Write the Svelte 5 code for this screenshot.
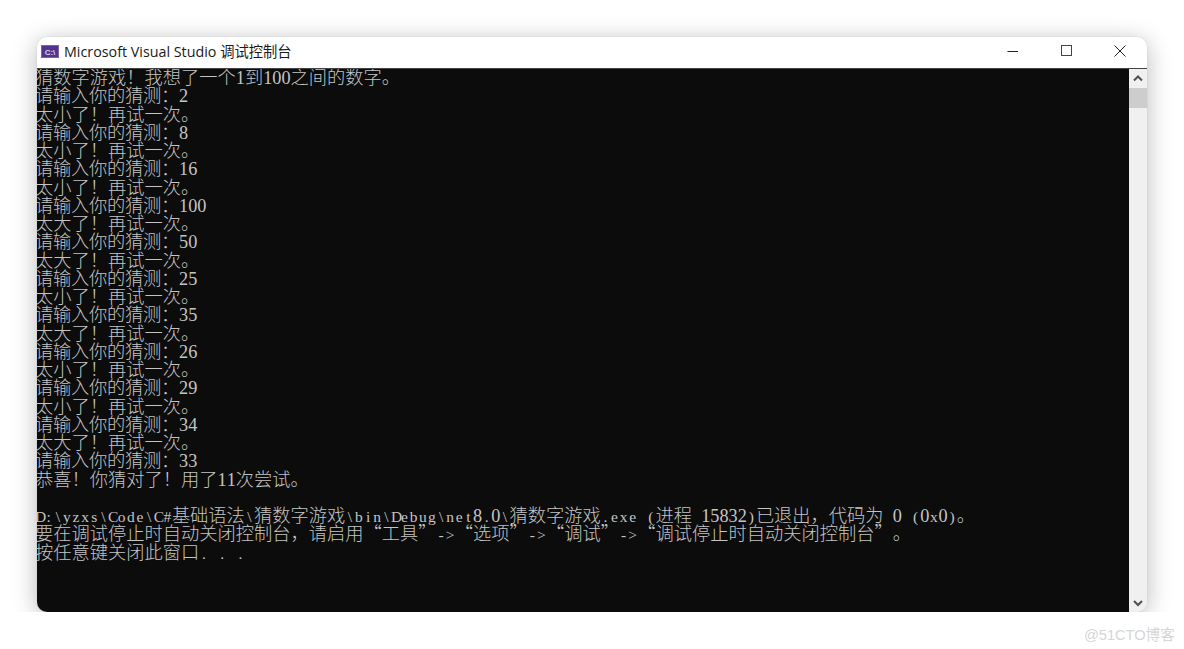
<script lang="ts">
	const lines = [
		'猜数字游戏！我想了一个1到100之间的数字。',
		'请输入你的猜测：2',
		'太小了！再试一次。',
		'请输入你的猜测：8',
		'太小了！再试一次。',
		'请输入你的猜测：16',
		'太小了！再试一次。',
		'请输入你的猜测：100',
		'太大了！再试一次。',
		'请输入你的猜测：50',
		'太大了！再试一次。',
		'请输入你的猜测：25',
		'太小了！再试一次。',
		'请输入你的猜测：35',
		'太大了！再试一次。',
		'请输入你的猜测：26',
		'太小了！再试一次。',
		'请输入你的猜测：29',
		'太小了！再试一次。',
		'请输入你的猜测：34',
		'太大了！再试一次。',
		'请输入你的猜测：33',
		'恭喜！你猜对了！用了11次尝试。',
		'',
		'D:\\yzxs\\Code\\C#基础语法\\猜数字游戏\\bin\\Debug\\net8.0\\猜数字游戏.exe (进程 15832)已退出，代码为 0 (0x0)。',
		'要在调试停止时自动关闭控制台，请启用“工具”->“选项”->“调试”->“调试停止时自动关闭控制台”。',
		'按任意键关闭此窗口. . .'
	];

	// latin and cjk need different sizes to keep the 1:2 console cell ratio
	function runs(line: string) {
		return line.match(/[\x20-\x7e]+|[^\x20-\x7e]+/g) ?? [];
	}

	const isLatin = (run: string) => run.charCodeAt(0) < 0x7f;
	const isDigit = (ch: string) => ch >= '0' && ch <= '9';
</script>

<div class="window">
	<div class="titlebar">
		<svg class="app-icon" width="18" height="13" viewBox="0 0 18 13">
			<rect x="0" y="0" width="18" height="13" fill="#7a63a8" />
			<rect x="1" y="1" width="16" height="11" fill="#53348c" />
			<text x="9" y="9.5" text-anchor="middle" class="icon-text">C:\</text>
		</svg>
		<span class="title">Microsoft Visual Studio 调试控制台</span>
		<div class="controls">
			<button type="button" aria-label="最小化">
				<svg width="12" height="12" viewBox="0 0 12 12"><path d="M.5 6.5h10.500" stroke="#222" fill="none" /></svg>
			</button>
			<button type="button" aria-label="最大化">
				<svg width="12" height="12" viewBox="0 0 12 12"><rect x=".5" y=".5" width="10" height="10" stroke="#444" fill="none" /></svg>
			</button>
			<button type="button" aria-label="关闭">
				<svg width="12" height="12" viewBox="0 0 12 12"><path d="M.5.5l11 11M11.500.5l-11 11" stroke="#222" fill="none" /></svg>
			</button>
		</div>
	</div>
	<div class="body">
		<div class="console">
			<div class="lines">
				{#each lines as line}
					<div class="line" class:prompt={line.startsWith('请输入')}>
						{#each runs(line) as run}
							{#if isLatin(run)}
								{#each run as ch}
									<span class="cell" class:digit={isDigit(ch)}>{ch}</span>
								{/each}
							{:else}
								<span class="cjk">{run}</span>
							{/if}
						{/each}
					</div>
				{/each}
			</div>
		</div>
		<div class="scrollbar">
			<svg width="18" height="19" viewBox="0 0 18 19"><path d="M5 11.500l4-4 4 4" stroke="#505050" stroke-width="2" fill="none" /></svg>
			<div class="thumb"></div>
			<div class="track"></div>
			<svg width="18" height="18" viewBox="0 0 18 18"><path d="M5 7l4 4 4-4" stroke="#505050" stroke-width="2" fill="none" /></svg>
		</div>
	</div>
</div>
<div class="watermark">@51CTO博客</div>

<style>
	:global(body) {
		background: #fff;
		overflow: hidden;
	}

	.window {
		width: 1110px;
		height: 575px;
		margin: 37px 0 0 37px;
		display: flex;
		flex-direction: column;
		background: #fff;
		border-radius: 10px;
		overflow: hidden;
		box-shadow: 0 4px 24px rgba(0, 0, 0, 0.28), 0 0 1px rgba(0, 0, 0, 0.3);
	}

	.titlebar {
		height: 31px;
		flex: none;
		box-sizing: border-box;
		display: flex;
		align-items: center;
		padding: 0 0 3px 4px;
		background: #fff;
	}

	.app-icon {
		margin-right: 5px;
	}

	.icon-text {
		font-family: 'Liberation Sans', sans-serif;
		font-size: 8px;
		font-weight: 700;
		fill: #d8d0e6;
	}

	.title {
		font-family: 'Open Sans', 'Noto Sans CJK SC', sans-serif;
		font-size: 14.3px;
		color: #1a1a1a;
		margin-top: -2px;
	}

	.controls {
		margin-left: auto;
		display: flex;
	}

	.controls button {
		width: 53.500px;
		height: 28px;
		padding: 0;
		border: none;
		background: none;
		display: flex;
		align-items: center;
		justify-content: center;
	}

	.body {
		flex: 1;
		min-height: 0;
		display: flex;
		border-top: 1px solid #444;
	}

	.console {
		flex: 1;
		min-width: 0;
		overflow: hidden;
		background: #0c0c0c;
		color: #c4c4c4;
	}

	.lines {
		margin: -2px 0 0 -2px;
	}

	.line {
		height: 18.25px;
		line-height: 18.25px;
		white-space: pre;
		font-kerning: none;
		text-spacing-trim: space-all;
	}

	.cell {
		display: inline-block;
		width: 9.125px;
		text-align: center;
		font-family: 'Liberation Serif', serif;
		font-size: 15.5px;
	}

	.cell.digit {
		font-size: 18.25px;
	}

	.cjk {
		font-family: 'Noto Sans CJK SC', sans-serif;
		font-size: 18.25px;
		font-weight: 300;
	}

	.prompt .cjk {
		letter-spacing: -0.25px;
	}

	.scrollbar {
		width: 18px;
		flex: none;
		display: flex;
		flex-direction: column;
		background: #f0f0f0;
	}

	.thumb {
		height: 20px;
		background: #cdcdcd;
	}

	.track {
		flex: 1;
	}

	.watermark {
		position: absolute;
		left: 1084px;
		top: 623px;
		font-family: 'Liberation Sans', 'Noto Sans CJK SC', sans-serif;
		font-size: 14.6px;
		color: #d6d6d6;
	}
</style>
